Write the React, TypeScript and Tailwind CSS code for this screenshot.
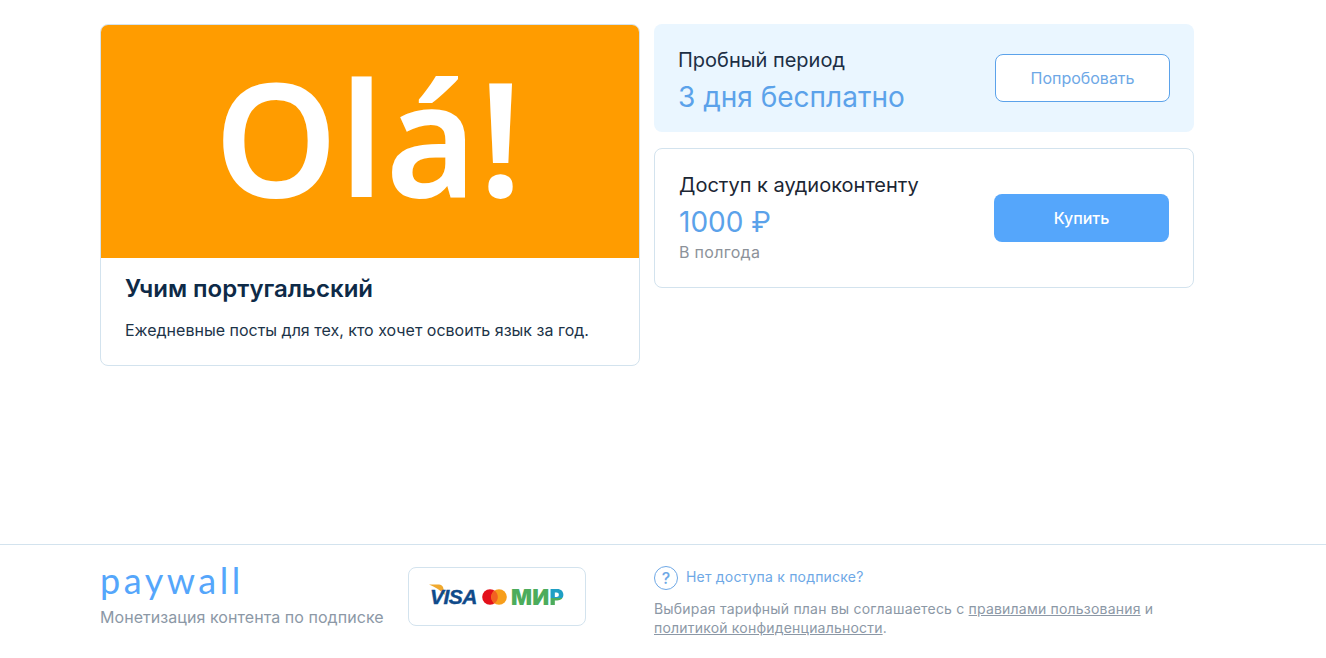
const font = "font-['Inter','Noto_Sans',sans-serif]";

const PaymentLogos = () => (
  <div className="flex items-center">
    <div className="relative">
      <svg className="absolute -top-[2px] -left-[1px]" width="24" height="14" viewBox="0 0 24 14">
        <path d="M0 0.5 H10 C12 0.5 13 1.5 14 3 L16 11 C11 6 6 3 0 0.5 Z" fill="#f0a92e" />
      </svg>
      <span className="relative block font-['Liberation_Sans',sans-serif] text-[21px] leading-[22px] font-bold italic tracking-[-0.5px] text-[#0f4a8a] [-webkit-text-stroke:0.4px_#0f4a8a]">
        VISA
      </span>
    </div>
    <svg className="ml-[5px]" width="25" height="16" viewBox="0 0 25 16">
      <circle cx="8" cy="8" r="7.8" fill="#e3101a" />
      <circle cx="17" cy="8" r="7.8" fill="#f79e1b" />
      <path d="M12.5 1.6 A7.8 7.8 0 0 1 12.5 14.4 A7.8 7.8 0 0 1 12.5 1.6 Z" fill="#f26122" />
    </svg>
    <span className="ml-[4px] text-[22px] leading-[22px] font-black tracking-[0.2px] text-[#4cac5c]">
      МИ
      <span className="bg-[linear-gradient(to_bottom,#1f9fc4_52%,#4cac5c_52%)] bg-clip-text text-transparent">Р</span>
    </span>
  </div>
);

export default function App() {
  return (
    <div className={`flex min-h-screen flex-col bg-white ${font}`}>
      <main className="ml-[100px] flex w-[1094px] flex-1 items-start gap-[14px] pt-6">
        <section className="w-[540px] overflow-hidden rounded-lg border border-[#d3e3ee]">
          <div className="flex h-[233px] items-center justify-center overflow-hidden bg-[#ff9c00]">
            <span className="mb-[12px] font-['Open_Sans',sans-serif] text-[155px] leading-none font-semibold tracking-[3px] text-white [-webkit-text-stroke:2px_#ffffff]">
              Olá!
            </span>
          </div>
          <div className="h-[107px] px-6 pt-4">
            <h2 className="text-[24px] leading-[30px] font-semibold text-[#0e2a47]">Учим португальский</h2>
            <p className="mt-4 text-[16px] leading-5 text-[#1c3348]">
              Ежедневные посты для тех, кто хочет освоить язык за год.
            </p>
          </div>
        </section>

        <div className="flex w-[540px] flex-col gap-4">
          <section className="flex h-[108px] items-center justify-between rounded-lg bg-[#eaf6ff] pr-6 pl-6">
            <div className="mt-[5px]">
              <div className="text-[20px] leading-6 text-[#1c2f45]">Пробный период</div>
              <div className="mt-[9px] text-[28px] leading-8 text-[#5ba2ea]">3 дня бесплатно</div>
            </div>
            <button className="h-12 w-[175px] rounded-lg border border-[#5ba2ea] bg-white text-[16px] text-[#6ea8e6]">
              Попробовать
            </button>
          </section>

          <section className="flex h-[140px] items-center justify-between rounded-lg border border-[#d3e3ee] pr-6 pl-6">
            <div className="-mt-[1px]">
              <div className="text-[20px] leading-6 text-[#1c2633]">Доступ к аудиоконтенту</div>
              <div className="mt-[9px] text-[28px] leading-8 text-[#5ba2ea]">1000 ₽</div>
              <div className="mt-[4px] text-[16px] leading-5 tracking-[0.3px] text-[#8c9299]">В полгода</div>
            </div>
            <button className="h-12 w-[175px] rounded-lg bg-[#55a6fb] text-[16px] font-medium text-white">
              Купить
            </button>
          </section>
        </div>
      </main>

      <footer className="h-[114px] border-t border-[#d3e3ee]">
        <div className="ml-[100px] flex w-[1094px] items-start">
          <div className="w-[308px] pt-[13px]">
            <div className="font-['Lato',sans-serif] text-[36px] leading-[44px] tracking-[3.5px] text-[#55a6fb]">
              paywall
            </div>
            <div className="mt-[5px] text-[16px] leading-5 tracking-[0.06px] text-[#8c98a6]">
              Монетизация контента по подписке
            </div>
          </div>
          <div className="mt-[22px] flex h-[59px] w-[178px] items-center justify-center rounded-lg border border-[#d3e3ee]">
            <PaymentLogos />
          </div>
          <div className="ml-[68px] pt-[21px]">
            <div className="flex items-center gap-2">
              <span className="flex h-6 w-6 items-center justify-center rounded-full border border-[#6ea8e6] text-[16px] font-medium text-[#6ea8e6]">
                ?
              </span>
              <span className="pb-[3px] text-[14px] tracking-[0.2px] text-[#6ea8e6]">Нет доступа к подписке?</span>
            </div>
            <p className="mt-[9px] text-[14px] leading-[19px] tracking-[0.2px] text-[#8c98a6]">
              Выбирая тарифный план вы соглашаетесь с <a className="underline">правилами пользования</a> и
              <br />
              <a className="underline">политикой конфиденциальности</a>.
            </p>
          </div>
        </div>
      </footer>
    </div>
  );
}
